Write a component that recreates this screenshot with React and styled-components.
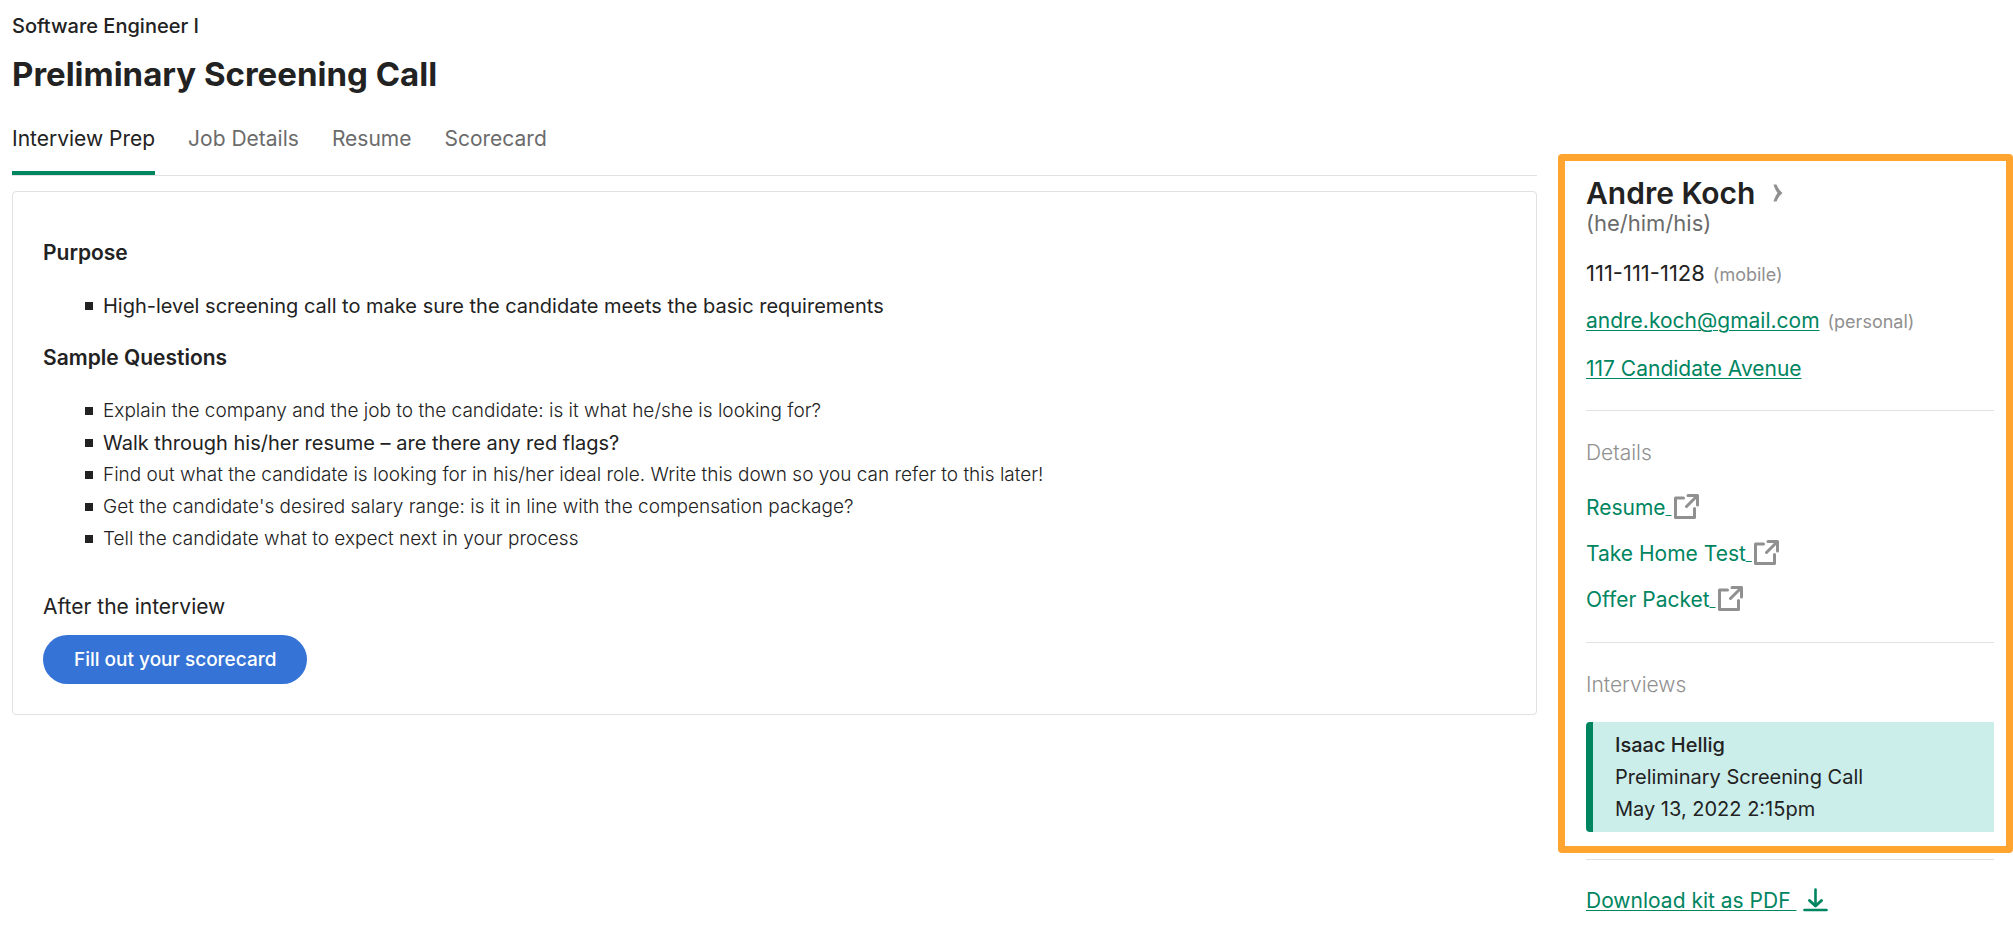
import styled, { createGlobalStyle } from "styled-components";

const tabs = ["Interview Prep", "Job Details", "Resume", "Scorecard"];

const questions = [
  { text: "Explain the company and the job to the candidate: is it what he/she is looking for?" },
  { text: "Walk through his/her resume – are there any red flags?", large: true },
  {
    text: "Find out what the candidate is looking for in his/her ideal role. Write this down so you can refer to this later!",
  },
  { text: "Get the candidate's desired salary range: is it in line with the compensation package?" },
  { text: "Tell the candidate what to expect next in your process" },
];

const documents = ["Resume", "Take Home Test", "Offer Packet"];

const ExternalIcon = () => (
  <svg width="25" height="25" viewBox="0 0 25 25" fill="none" stroke="#909090" aria-hidden="true">
    <path d="M9.5 4H1.5V23.5H20.5V14.5" strokeWidth="3" strokeLinecap="round" strokeLinejoin="round" />
    <path d="M14 1.5H23.5V11" strokeWidth="3" strokeLinecap="round" strokeLinejoin="round" />
    <path d="M23 2L12.5 12.5" strokeWidth="3" strokeLinecap="round" />
  </svg>
);

const DownloadIcon = () => (
  <svg width="25" height="25" viewBox="0 0 25 25" fill="none" stroke="#008561" strokeLinecap="round" aria-hidden="true">
    <path d="M12.5 2.5V18.5" strokeWidth="2.6" />
    <path d="M6.5 13.5L12.5 19L18.5 13.5" strokeWidth="3" strokeLinejoin="round" />
    <path d="M1.5 23H23.5" strokeWidth="2.6" />
  </svg>
);

const ChevronIcon = () => (
  <svg width="10" height="18" viewBox="0 0 10 18" fill="#909090" aria-hidden="true">
    <path d="M0.5 0.5H3.5C4.5 3.5 6.5 6.5 9.5 9C6.5 11.5 4.5 14.5 3.5 17.5H0.5C1.5 14 3 11 4.5 9C3 7 1.5 4 0.5 0.5Z" />
  </svg>
);

const App = () => {
  return (
    <>
      <GlobalStyle />
      <Page>
        <Main>
          <JobName>Software Engineer I</JobName>
          <Title>Preliminary Screening Call</Title>
          <Tabs>
            {tabs.map((tab, index) => (
              <Tab key={tab} href="#" $active={index === 0}>
                {tab}
              </Tab>
            ))}
          </Tabs>
          <Card>
            <SectionTitle>Purpose</SectionTitle>
            <List>
              <Item $large>High-level screening call to make sure the candidate meets the basic requirements</Item>
            </List>
            <SectionTitle>Sample Questions</SectionTitle>
            <List>
              {questions.map((question) => (
                <Item key={question.text} $large={question.large}>
                  {question.text}
                </Item>
              ))}
            </List>
            <AfterText>After the interview</AfterText>
            <Button type="button">Fill out your scorecard</Button>
          </Card>
        </Main>

        <Sidebar>
          <Highlight>
            <NameRow>
              <Name>Andre Koch</Name>
              <ChevronIcon />
            </NameRow>
            <Pronouns>(he/him/his)</Pronouns>
            <ContactList>
              <Contact>
                <Phone>111-111-1128</Phone>
                <Kind>(mobile)</Kind>
              </Contact>
              <Contact>
                <Link href="mailto:andre.koch@gmail.com">andre.koch@gmail.com</Link>
                <Kind>(personal)</Kind>
              </Contact>
              <Contact>
                <Link href="#">117 Candidate Avenue</Link>
              </Contact>
            </ContactList>
            <Section>
              <SideTitle>Details</SideTitle>
              <Documents>
                {documents.map((name) => (
                  <DocumentLink key={name} href="#">
                    <span>
                      {name}
                      <u>&nbsp;</u>
                    </span>
                    <ExternalIcon />
                  </DocumentLink>
                ))}
              </Documents>
            </Section>
            <Section>
              <SideTitle>Interviews</SideTitle>
              <Interview>
                <Interviewer>Isaac Hellig</Interviewer>
                <p>Preliminary Screening Call</p>
                <p>May 13, 2022 2:15pm</p>
              </Interview>
            </Section>
          </Highlight>
          <Download>
            <Link href="#">Download kit as PDF&nbsp;</Link>
            <DownloadIcon />
          </Download>
        </Sidebar>
      </Page>
    </>
  );
};

const GlobalStyle = createGlobalStyle`
  * {
    margin: 0;
    padding: 0;
    box-sizing: border-box;
  }

  body {
    background-color: #fff;
    color: #222;
    font-family: Inter, "Liberation Sans", sans-serif;
    font-size: 21px;
    line-height: 28px;
  }

  svg {
    flex: none;
  }
`;

const Page = styled.div`
  display: flex;
  align-items: flex-start;
  gap: 21px;
  padding-left: 12px;
`;

const Main = styled.main`
  flex: 1;
  min-width: 0;
  padding-top: 12px;
`;

const JobName = styled.p`
  font-size: 20px;
  font-weight: 500;
`;

const Title = styled.h1`
  margin-top: 14px;
  font-size: 33px;
  font-weight: 700;
  line-height: 40px;
`;

const Tabs = styled.nav`
  display: flex;
  gap: 33px;
  margin-top: 31px;
  border-bottom: 1px solid #e1e1e1;
`;

const Tab = styled.a`
  padding-bottom: 18px;
  border-bottom: 4px solid ${({ $active }) => ($active ? "#008561" : "transparent")};
  color: ${({ $active }) => ($active ? "#222" : "#6b6b6b")};
  text-decoration: none;
`;

const Card = styled.section`
  margin-top: 15px;
  padding: 45px 30px 30px;
  border: 1px solid #e1e1e1;
  border-radius: 4px;
`;

const SectionTitle = styled.h2`
  font-size: 21px;
  font-weight: 600;
  line-height: 32px;
`;

const List = styled.ul`
  margin: 21px 0 20px;
  padding-left: 42px;
  list-style: none;
`;

const Item = styled.li`
  display: flex;
  align-items: center;
  gap: 10px;
  font-size: ${({ $large }) => ($large ? "20px" : "19px")};
  font-weight: ${({ $large }) => ($large ? 400 : 300)};
  line-height: 32px;

  &::before {
    content: "";
    flex: none;
    width: 8px;
    height: 8px;
    background-color: #222;
  }
`;

const AfterText = styled.p`
  margin-top: 38px;
`;

const Button = styled.button`
  height: 49px;
  margin-top: 14px;
  padding: 0 31px;
  border: none;
  border-radius: 25px;
  background-color: #3574d6;
  color: #fff;
  font-family: inherit;
  font-size: 19px;
  font-weight: 500;
  cursor: pointer;
`;

const Sidebar = styled.aside`
  flex: none;
  width: 455px;
  padding-top: 154px;
`;

const Highlight = styled.div`
  padding: 14px 12px 14px 21px;
  border: 7px solid #ffa52f;
  border-radius: 4px;
`;

const NameRow = styled.div`
  display: flex;
  align-items: center;
  gap: 18px;
`;

const Name = styled.h2`
  font-size: 30px;
  font-weight: 600;
  line-height: 36px;
`;

const Pronouns = styled.p`
  color: #6b6b6b;
  font-size: 22px;
  line-height: 24px;
`;

const ContactList = styled.div`
  display: flex;
  flex-direction: column;
  gap: 20px;
  margin: 24px 0 27px;
`;

const Contact = styled.div`
  display: flex;
  align-items: baseline;
  gap: 8px;
`;

const Phone = styled.span`
  font-size: 22px;
`;

const Kind = styled.span`
  color: #909090;
  font-size: 18px;
  line-height: 20px;
`;

const Link = styled.a`
  color: #008561;
  text-decoration-thickness: 1px;
  text-underline-offset: 2px;
`;

const Section = styled.section`
  padding-top: 28px;
  border-top: 1px solid #e1e1e1;
`;

const SideTitle = styled.h3`
  color: #909090;
  font-size: 21px;
  font-weight: 300;
`;

const Documents = styled.div`
  display: flex;
  flex-direction: column;
  align-items: flex-start;
  gap: 18px;
  margin: 27px 0 28px;
`;

const DocumentLink = styled.a`
  display: flex;
  gap: 2px;
  color: #008561;
  text-decoration: none;

  u {
    text-decoration-thickness: 1px;
    text-underline-offset: 0;
  }
`;

const Interview = styled.div`
  margin-top: 23px;
  padding: 7px 22px;
  border-left: 7px solid #008561;
  border-radius: 4px 0 0 4px;
  background-color: #cceeeb;
  font-size: 20px;
  line-height: 32px;
`;

const Interviewer = styled.p`
  font-weight: 500;
`;

const Download = styled.div`
  display: flex;
  gap: 7px;
  margin: 6px 19px 0 28px;
  padding-top: 27px;
  border-top: 1px solid #e1e1e1;
`;

export default App;
